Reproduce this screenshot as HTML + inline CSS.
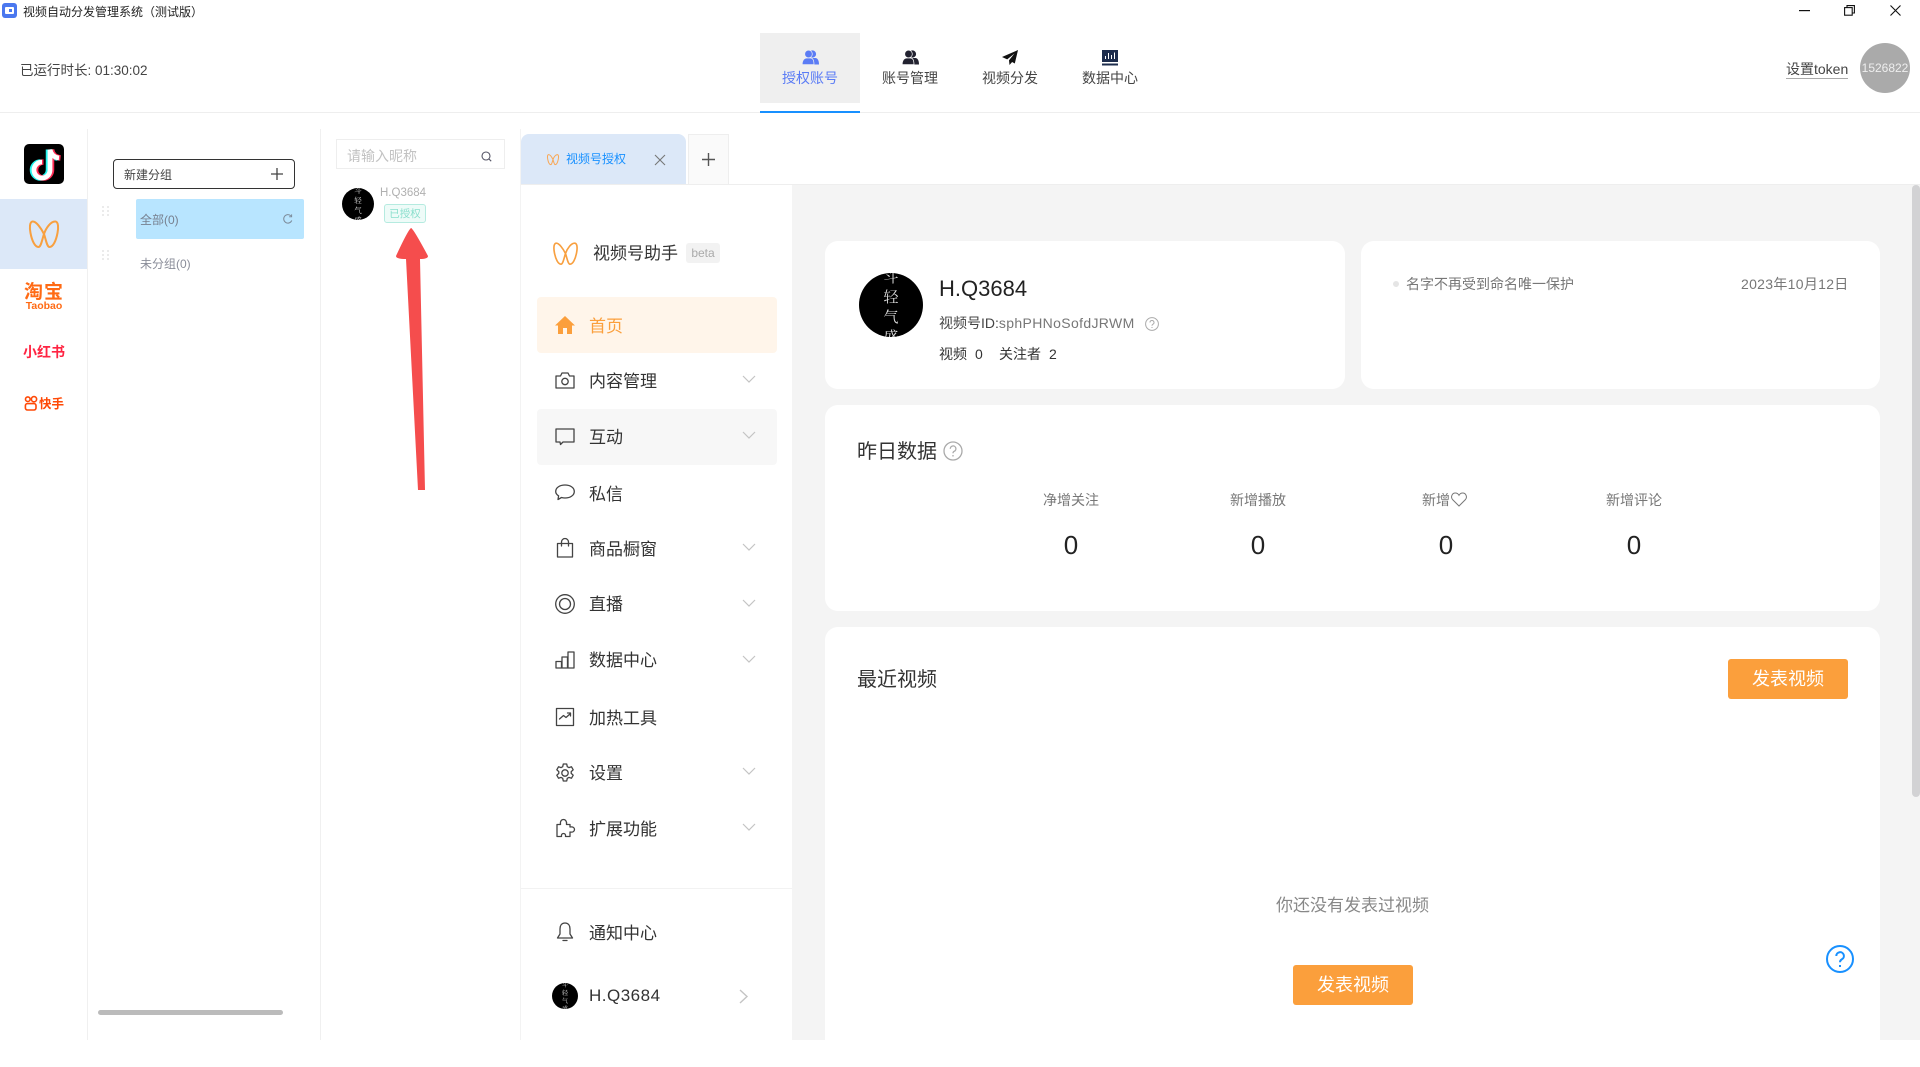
<!DOCTYPE html>
<html lang="zh"><head><meta charset="utf-8"><title>视频自动分发管理系统（测试版）</title>
<style>
html,body{margin:0;padding:0;width:1920px;height:1040px;overflow:hidden;background:#fff;font-family:"Liberation Sans","Noto Sans CJK SC",sans-serif;color:#333}
.a{position:absolute}
.t{position:absolute;white-space:nowrap;line-height:20px;height:20px}
.m{font-size:17px;color:#333;left:589px;margin-top:1px}
.card{position:absolute;background:#fff;border-radius:13px}
.btn{position:absolute;width:120px;height:40px;line-height:41px;text-align:center;background:#fb9f3c;color:#fff;font-size:18px;border-radius:3px}
.lab{font-size:14px;color:#777;width:120px;text-align:center}
.num{position:absolute;font-size:26px;color:#222;width:120px;text-align:center;line-height:30px;top:530px}
.nav{font-size:14px;color:#444;width:100px;text-align:center;top:68px}
svg{position:absolute;overflow:visible}
.ic{fill:none;stroke:#444;stroke-width:1.3;stroke-linejoin:round;stroke-linecap:round}
.av{position:absolute;background:#000;border-radius:50%;overflow:hidden;color:#ddd;text-align:center;font-family:"Noto Serif CJK SC",serif}
</style></head><body>

<!-- title bar -->
<svg style="left:2px;top:3px" width="15" height="15" viewBox="0 0 15 15"><rect width="15" height="15" rx="3" fill="#4b78ef"/><rect x="3" y="4" width="9" height="7" rx="1" fill="#fff"/><rect x="7" y="6" width="3" height="3" fill="#4b78ef"/></svg>
<div class="t" style="left:23px;top:2px;font-size:12px;color:#222">视频自动分发管理系统（测试版）</div>
<svg style="left:1799px;top:10px" width="11" height="2"><rect width="11" height="1.2" fill="#111"/></svg>
<svg style="left:1844px;top:5px" width="11" height="11" viewBox="0 0 11 11" fill="none" stroke="#111" stroke-width="1.1"><rect x=".6" y="2.6" width="7.6" height="7.6"/><path d="M3 2.6V.6h7.4V8H8.2"/></svg>
<svg style="left:1890px;top:5px" width="11" height="11" viewBox="0 0 11 11" fill="none" stroke="#111" stroke-width="1.1"><path d="M.5.5l10 10M10.5.5l-10 10"/></svg>

<!-- header -->
<div class="t" style="left:20px;top:60px;font-size:13.5px;color:#444;margin-top:1px">已运行时长: 01:30:02</div>
<div class="a" style="left:0;top:112px;width:1920px;height:1px;background:#eee"></div>
<div class="a" style="left:760px;top:33px;width:100px;height:70px;background:#efefef"></div>
<div class="a" style="left:760px;top:111px;width:100px;height:2px;background:#1890ff"></div>
<svg style="left:802px;top:50px" width="17" height="15" viewBox="0 0 17 15"><g fill="#5b7cf5"><circle cx="10.5" cy="4" r="3.6"/><path d="M8 8h5.5c2 0 3.5 2.5 3.5 6.5H9z"/><circle cx="6.5" cy="4" r="3.8" stroke="#efefef" stroke-width=".7"/><path d="M.2 14.6C.2 10 2.5 8 4.5 8h4c2 0 3.5 2 3.5 6.6z" stroke="#efefef" stroke-width=".7"/></g></svg>
<div class="t nav" style="left:760px;color:#5b7cf5">授权账号</div>
<svg style="left:902px;top:50px" width="17" height="15" viewBox="0 0 17 15"><g fill="#222230"><circle cx="10.5" cy="4" r="3.6"/><path d="M8 8h5.5c2 0 3.5 2.5 3.5 6.5H9z"/><circle cx="6.5" cy="4" r="3.8" stroke="#fff" stroke-width=".7"/><path d="M.2 14.6C.2 10 2.5 8 4.5 8h4c2 0 3.5 2 3.5 6.6z" stroke="#fff" stroke-width=".7"/></g></svg>
<div class="t nav" style="left:860px">账号管理</div>
<svg style="left:1002px;top:50px" width="16" height="15" viewBox="0 0 16 15"><path d="M16 0L0 7l5.200 2.400L12.500 3.500 7 10.300 7.500 15l2.600-3 2.700 1.500z" fill="#111"/></svg>
<div class="t nav" style="left:960px">视频分发</div>
<svg style="left:1102px;top:50px" width="16" height="16" viewBox="0 0 16 16"><rect width="16" height="12" fill="#1c2c4c"/><rect y="13.5" width="16" height="2" fill="#1c2c4c"/><path d="M3.5 9V6M6.5 9V3M9.5 9V5M12.5 9V2.5" stroke="#fff" stroke-width="1"/></svg>
<div class="t nav" style="left:1060px">数据中心</div>
<div class="t" style="left:1786px;top:59px;font-size:14px;color:#444;border-bottom:1px solid #aaa;height:19px;line-height:20px">设置token</div>
<div class="a" style="left:1860px;top:43px;width:50px;height:50px;border-radius:50%;background:#aaa;color:#eee;font-size:12px;line-height:51px;text-align:center;overflow:hidden">1526822</div>

<!-- rail -->
<div class="a" style="left:87px;top:129px;width:1px;height:911px;background:#f0f0f0"></div>
<div class="a" style="left:320px;top:129px;width:1px;height:911px;background:#f0f0f0"></div>
<svg style="left:24px;top:144px" width="40" height="40" viewBox="0 0 40 40"><rect width="40" height="40" rx="5" fill="#000"/>
<path d="M26 5v20.500a8 8 0 1 1-8-8M26 5c.8 5 4 8 9 8.500" fill="none" stroke="#25f4ee" stroke-width="5.500" transform="translate(-1.500 .5)"/>
<path d="M26 5v20.500a8 8 0 1 1-8-8M26 5c.8 5 4 8 9 8.500" fill="none" stroke="#fe2c55" stroke-width="5.500" transform="translate(1.500 .5)"/>
<path d="M26 5v20.500a8 8 0 1 1-8-8M26 5c.8 5 4 8 9 8.500" fill="none" stroke="#fff" stroke-width="4.800" transform="translate(0 .5)"/></svg>
<div class="a" style="left:0;top:199px;width:87px;height:70px;background:#dce8f8"></div>
<svg style="left:29px;top:220px" width="30" height="28" viewBox="0 0 30 28" fill="none" stroke="#f8a040" stroke-width="2"><path d="M15 14C12 8 7 1 3.500 1.500.5 2 .5 8 1.500 13c1.500 8 4.500 14 8 14 2.500 0 3.500-7 5.500-13 2-6 7-13 11.500-12.500 3 .5 3 6.500 2 11.500-1.500 8-4.500 14-8 14-2.500 0-3.500-7-5.500-13z"/></svg>
<div class="a" style="left:24px;top:284px;width:40px;text-align:center;color:#ff6a14;font-weight:bold;line-height:18px;font-size:19px;white-space:nowrap;letter-spacing:1px">淘宝</div>
<div class="a" style="left:14px;top:300px;width:60px;text-align:center;color:#ff6a14;font-weight:bold;line-height:12px;font-size:10.5px">Taobao</div>
<div class="a" style="left:14px;top:342px;width:60px;text-align:center;color:#ff2442;font-weight:bold;line-height:20px;font-size:14px;white-space:nowrap">小红书</div>
<svg style="left:24px;top:396px" width="14" height="15" viewBox="0 0 14 15" fill="none" stroke="#ff4906" stroke-width="1.6"><circle cx="3.8" cy="3.2" r="2.3"/><circle cx="10" cy="3.2" r="2.6"/><rect x="1.4" y="7.6" width="10.6" height="6.4" rx="2"/></svg>
<div class="a" style="left:39px;top:394px;color:#ff4906;font-weight:bold;line-height:20px;font-size:12.5px;white-space:nowrap">快手</div>

<!-- groups -->
<div class="a" style="left:113px;top:159px;width:180px;height:28px;border:1px solid #333;border-radius:4px"></div>
<div class="t" style="left:124px;top:165px;font-size:12px;color:#444">新建分组</div>
<svg style="left:271px;top:168px" width="12" height="12" stroke="#444" stroke-width="1.3"><path d="M6 0v12M0 6h12"/></svg>
<div class="a" style="left:136px;top:199px;width:168px;height:40px;background:#b8e5ff;border-radius:2px"></div>
<div class="t" style="left:140px;top:210px;font-size:12px;color:#77808f">全部(0)</div>
<svg style="left:283px;top:214px" width="10" height="10" viewBox="0 0 10 10" fill="none" stroke="#7c8a99" stroke-width="1"><path d="M8.8 6.5A4.2 4.2 0 1 1 7.8 1.8"/><path d="M8.6.4v2.4H6.2" /></svg>
<svg style="left:102px;top:206px" width="7" height="10" fill="#ddd"><circle cx="1" cy="1" r=".9"/><circle cx="6" cy="1" r=".9"/><circle cx="1" cy="5" r=".9"/><circle cx="6" cy="5" r=".9"/><circle cx="1" cy="9" r=".9"/><circle cx="6" cy="9" r=".9"/></svg>
<svg style="left:102px;top:250px" width="7" height="10" fill="#ddd"><circle cx="1" cy="1" r=".9"/><circle cx="6" cy="1" r=".9"/><circle cx="1" cy="5" r=".9"/><circle cx="6" cy="5" r=".9"/><circle cx="1" cy="9" r=".9"/><circle cx="6" cy="9" r=".9"/></svg>
<div class="t" style="left:140px;top:254px;font-size:12px;color:#8a8d99">未分组(0)</div>
<div class="a" style="left:98px;top:1010px;width:185px;height:5px;border-radius:3px;background:#bbb"></div>

<!-- search / accounts -->
<div class="a" style="left:336px;top:139px;width:167px;height:28px;border:1px solid #eee"></div>
<div class="t" style="left:347px;top:146px;font-size:14px;color:#c2c2c2">请输入昵称</div>
<svg style="left:481px;top:151px" width="11" height="11" viewBox="0 0 11 11" fill="none" stroke="#556" stroke-width="1.1"><circle cx="5" cy="5" r="4"/><path d="M8 8l2.2 2.2"/></svg>
<div class="av" style="left:342px;top:188px;width:32px;height:32px"><div style="margin-top:-2px;font-size:7.5px;line-height:10px">斗<br>轻<br>气<br>盛</div></div>
<div class="t" style="left:380px;top:183px;font-size:11.5px;color:#b0b0b0">H.Q3684</div>
<div class="a" style="left:384px;top:204px;width:40px;height:17px;border:1px solid #b5ebe0;background:#eefbf8;border-radius:3px;text-align:center;font-size:10.5px;line-height:18px;color:#8adfcd">已授权</div>
<svg style="left:0;top:0;z-index:5" width="1920" height="1040"><path d="M411 228Q413 228 428 256Q428 259 420 259L425 490H418L406 259Q396 259 396 256Q408 230 411 228Z" fill="#f54d4d"/></svg>

<!-- tabs -->
<div class="a" style="left:521px;top:134px;width:165px;height:50px;background:#dce8f8;border-radius:8px 8px 0 0"></div>
<svg style="left:547px;top:154px" width="12" height="11" viewBox="0 0 30 28" fill="none" stroke="#f8a858" stroke-width="2.6"><path d="M15 14C12 8 7 1 3.500 1.500.5 2 .5 8 1.500 13c1.500 8 4.500 14 8 14 2.500 0 3.500-7 5.500-13 2-6 7-13 11.500-12.500 3 .5 3 6.500 2 11.500-1.500 8-4.500 14-8 14-2.500 0-3.500-7-5.500-13z"/></svg>
<div class="t" style="left:566px;top:149px;font-size:12px;color:#1890ff">视频号授权</div>
<svg style="left:655px;top:155px" width="10" height="10" stroke="#777" stroke-width="1.1"><path d="M0 0l10 10M10 0L0 10"/></svg>
<div class="a" style="left:688px;top:134px;width:39px;height:50px;background:#fafafa;border:1px solid #eee;border-bottom:0;box-sizing:content-box"></div>
<svg style="left:702px;top:153px" width="13" height="13" stroke="#555" stroke-width="1.4"><path d="M6.500 0v13M0 6.500h13"/></svg>
<div class="a" style="left:521px;top:184px;width:1399px;height:1px;background:#eee"></div>

<!-- gray content -->
<div class="a" style="left:792px;top:185px;width:1128px;height:855px;background:#f4f4f4"></div>
<div class="a" style="left:1912px;top:185px;width:8px;height:612px;background:#d2d2d4;border-radius:4px"></div>
<div class="a" style="left:520px;top:129px;width:1px;height:911px;background:#f3f3f3"></div>

<!-- side menu -->
<svg style="left:553px;top:242px" width="25" height="23" viewBox="0 0 30 28" fill="none" stroke="#f8a040" stroke-width="2"><path d="M15 14C12 8 7 1 3.500 1.500.5 2 .5 8 1.500 13c1.500 8 4.500 14 8 14 2.500 0 3.500-7 5.500-13 2-6 7-13 11.500-12.500 3 .5 3 6.500 2 11.500-1.500 8-4.500 14-8 14-2.500 0-3.500-7-5.500-13z"/></svg>
<div class="t" style="left:593px;top:244px;font-size:17px;color:#333">视频号助手</div>
<div class="a" style="left:686px;top:243px;width:34px;height:20px;background:#f2f2f2;border-radius:3px;text-align:center;font-size:12px;line-height:20px;color:#aaa">beta</div>

<div class="a" style="left:537px;top:297px;width:240px;height:56px;background:#fff5ea;border-radius:4px"></div>
<svg style="left:555px;top:316px" width="20" height="18" viewBox="0 0 20 18"><path d="M10 0L0 9.500h3V18h5v-6h4v6h5V9.500h3z" fill="#fb9f3c"/></svg>
<div class="t m" style="top:316px;color:#fb9f3c">首页</div>

<div class="a" style="left:537px;top:409px;width:240px;height:56px;background:#f7f7f7;border-radius:4px"></div>

<svg class="ic" style="left:555px;top:371px" width="20" height="20" viewBox="0 0 20 20"><path d="M1 5h4.500l1.500-3h6l1.500 3H19v12H1z"/><circle cx="10" cy="10.500" r="3.200"/></svg>
<div class="t m" style="top:371px">内容管理</div>
<svg class="ic" style="left:555px;top:427px" width="20" height="20" viewBox="0 0 20 20"><path d="M1 2h18v13H8l-2.500 2.500L5 15H1z"/></svg>
<div class="t m" style="top:427px">互动</div>
<svg class="ic" style="left:555px;top:483px" width="20" height="20" viewBox="0 0 20 20"><path d="M10 2c5 0 9.300 2.500 9.300 6.500S15 15 10 15c-1.300 0-2.500-.2-3.500-.5L3 16.500l.6-3.700C1.700 11.700.7 10.200.7 8.500.7 4.500 5 2 10 2z"/></svg>
<div class="t m" style="top:484px">私信</div>
<svg class="ic" style="left:555px;top:538px" width="20" height="20" viewBox="0 0 20 20"><path d="M2.500 5.500h15V19h-15zM6.500 8V4a3.500 3.500 0 0 1 7 0v4"/></svg>
<div class="t m" style="top:539px">商品橱窗</div>
<svg class="ic" style="left:555px;top:594px" width="20" height="20" viewBox="0 0 20 20"><circle cx="10" cy="10" r="9.300"/><circle cx="10" cy="10" r="5.500"/></svg>
<div class="t m" style="top:594px">直播</div>
<svg class="ic" style="left:555px;top:650px" width="20" height="20" viewBox="0 0 20 20"><path d="M1 11.500h5.500V18H1zM7 7h5.500v11H7zM13 2h6v16h-6z"/></svg>
<div class="t m" style="top:650px">数据中心</div>
<svg class="ic" style="left:555px;top:707px" width="20" height="20" viewBox="0 0 20 20"><path d="M1.500 1.500h17v17h-17zM4.500 12l4-3.500 2.500 2 4.500-4M12.500 6h3v3"/></svg>
<div class="t m" style="top:708px">加热工具</div>
<svg class="ic" style="left:555px;top:763px" width="20" height="20" viewBox="0 0 20 20"><circle cx="10" cy="10" r="3.200"/><path d="M8.300 1h3.400l.6 2.700 1.600.9 2.600-.8 1.700 3-2 1.800v1.800l2 1.800-1.700 3-2.600-.8-1.600.9-.6 2.700H8.300l-.6-2.700-1.600-.9-2.600.8-1.700-3 2-1.800V8.600l-2-1.800 1.700-3 2.600.8 1.600-.9z"/></svg>
<div class="t m" style="top:763px">设置</div>
<svg class="ic" style="left:555px;top:818px" width="20" height="20" viewBox="0 0 20 20"><path d="M2 6.500h3.500C5 3 6.500 1.500 8.500 1.500S12 3.500 11.500 6.500H15V9c3-.6 4.500.8 4.500 2.500S18 14.600 15 14v4.500h-4.500c.4-2-.6-3-2-3s-2.400 1-2 3H2z"/></svg>
<div class="t m" style="top:819px">扩展功能</div>

<svg fill="none" stroke="#c4c4c4" stroke-width="1.200" style="left:0;top:0" width="800" height="1040">
<path d="M743 376l6 6 6-6M743 432l6 6 6-6M743 544l6 6 6-6M743 600l6 6 6-6M743 656l6 6 6-6M743 768l6 6 6-6M743 824l6 6 6-6"/>
<path d="M740 990l7 6.500-7 6.500" stroke-width="1.400"/>
</svg>

<div class="a" style="left:521px;top:888px;width:271px;height:1px;background:#f2f2f2"></div>
<svg class="ic" style="left:555px;top:922px" width="20" height="20" viewBox="0 0 20 20"><path d="M10 1c-3.500 0-5 2.800-5 6v5l-2.500 4h15L15 12V7c0-3.200-1.500-6-5-6zM8 18.500h4"/></svg>
<div class="t m" style="top:923px">通知中心</div>
<div class="av" style="left:552px;top:983px;width:26px;height:26px"><div style="margin-top:-2px;font-size:6px;line-height:8px">斗<br>轻<br>气<br>盛</div></div>
<div class="t m" style="top:985px;font-size:17px;letter-spacing:.5px">H.Q3684</div>

<!-- cards -->
<div class="card" style="left:825px;top:241px;width:520px;height:148px"></div>
<div class="av" style="left:859px;top:273px;width:64px;height:64px"><div style="margin-top:-6px;font-size:15px;line-height:20px">斗<br>轻<br>气<br>盛</div></div>
<div class="t" style="left:939px;top:279px;font-size:22px;color:#222">H.Q3684</div>
<div class="t" style="left:939px;top:313px;font-size:14px;color:#444">视频号ID:<span style="color:#777;letter-spacing:.35px">sphPHNoSofdJRWM</span></div>
<svg style="left:1145px;top:317px" width="14" height="14" viewBox="0 0 14 14" fill="none" stroke="#aaa"><circle cx="7" cy="7" r="6.400"/><path d="M5 5.500a2 2 0 1 1 2.800 1.800c-.6.300-.8.700-.8 1.400M7 10v1"/></svg>
<div class="t" style="left:939px;top:344px;font-size:14px;color:#333">视频</div>
<div class="t" style="left:975px;top:344px;font-size:14px;color:#333">0</div>
<div class="t" style="left:999px;top:344px;font-size:14px;color:#333">关注者</div>
<div class="t" style="left:1049px;top:344px;font-size:14px;color:#333">2</div>

<div class="card" style="left:1361px;top:241px;width:519px;height:148px"></div>
<div class="a" style="left:1393px;top:281px;width:6px;height:6px;border-radius:50%;background:#e5e5e5"></div>
<div class="t" style="left:1406px;top:274px;font-size:14px;color:#777">名字不再受到命名唯一保护</div>
<div class="t" style="left:1741px;top:274px;font-size:14px;color:#777;letter-spacing:.3px">2023年10月12日</div>

<div class="card" style="left:825px;top:405px;width:1055px;height:206px"></div>
<div class="t" style="left:857px;top:442px;font-size:20px;color:#333">昨日数据</div>
<svg style="left:943px;top:441px" width="20" height="20" viewBox="0 0 20 20" fill="none" stroke="#aaa" stroke-width="1.300"><circle cx="10" cy="10" r="9"/><path d="M7.300 7.800a2.800 2.800 0 1 1 3.900 2.500c-.9.400-1.200 1-1.200 2M10 14v1.500"/></svg>
<div class="t lab" style="left:1011px;top:490px">净增关注</div>
<div class="t lab" style="left:1198px;top:490px">新增播放</div>
<div class="t" style="left:1422px;top:490px;font-size:14px;color:#777">新增</div>
<svg style="left:1451px;top:492px" width="16" height="15" viewBox="0 0 16 15" fill="none" stroke="#777" stroke-width="1"><path d="M8 14L1.500 7.500C-.5 5 1 1 4.300 1 6 1 7.300 2 8 3.300 8.700 2 10 1 11.700 1 15 1 16.500 5 14.500 7.500z"/></svg>
<div class="t lab" style="left:1574px;top:490px">新增评论</div>
<div class="num" style="left:1011px">0</div>
<div class="num" style="left:1198px">0</div>
<div class="num" style="left:1386px">0</div>
<div class="num" style="left:1574px">0</div>

<div class="card" style="left:825px;top:627px;width:1055px;height:440px"></div>
<div class="t" style="left:857px;top:670px;font-size:20px;color:#333">最近视频</div>
<div class="btn" style="left:1728px;top:659px">发表视频</div>
<div class="t" style="left:1276px;top:896px;font-size:17px;color:#888">你还没有发表过视频</div>
<div class="btn" style="left:1293px;top:965px">发表视频</div>
<svg style="left:1826px;top:945px" width="28" height="28" viewBox="0 0 28 28" fill="none" stroke="#1890ff" stroke-width="2"><circle cx="14" cy="14" r="13"/><path d="M10.300 11a3.800 3.800 0 1 1 5.600 3.300c-1.200.7-1.900 1.500-1.900 3"/><path d="M14 20v2"/></svg>
</body></html>
